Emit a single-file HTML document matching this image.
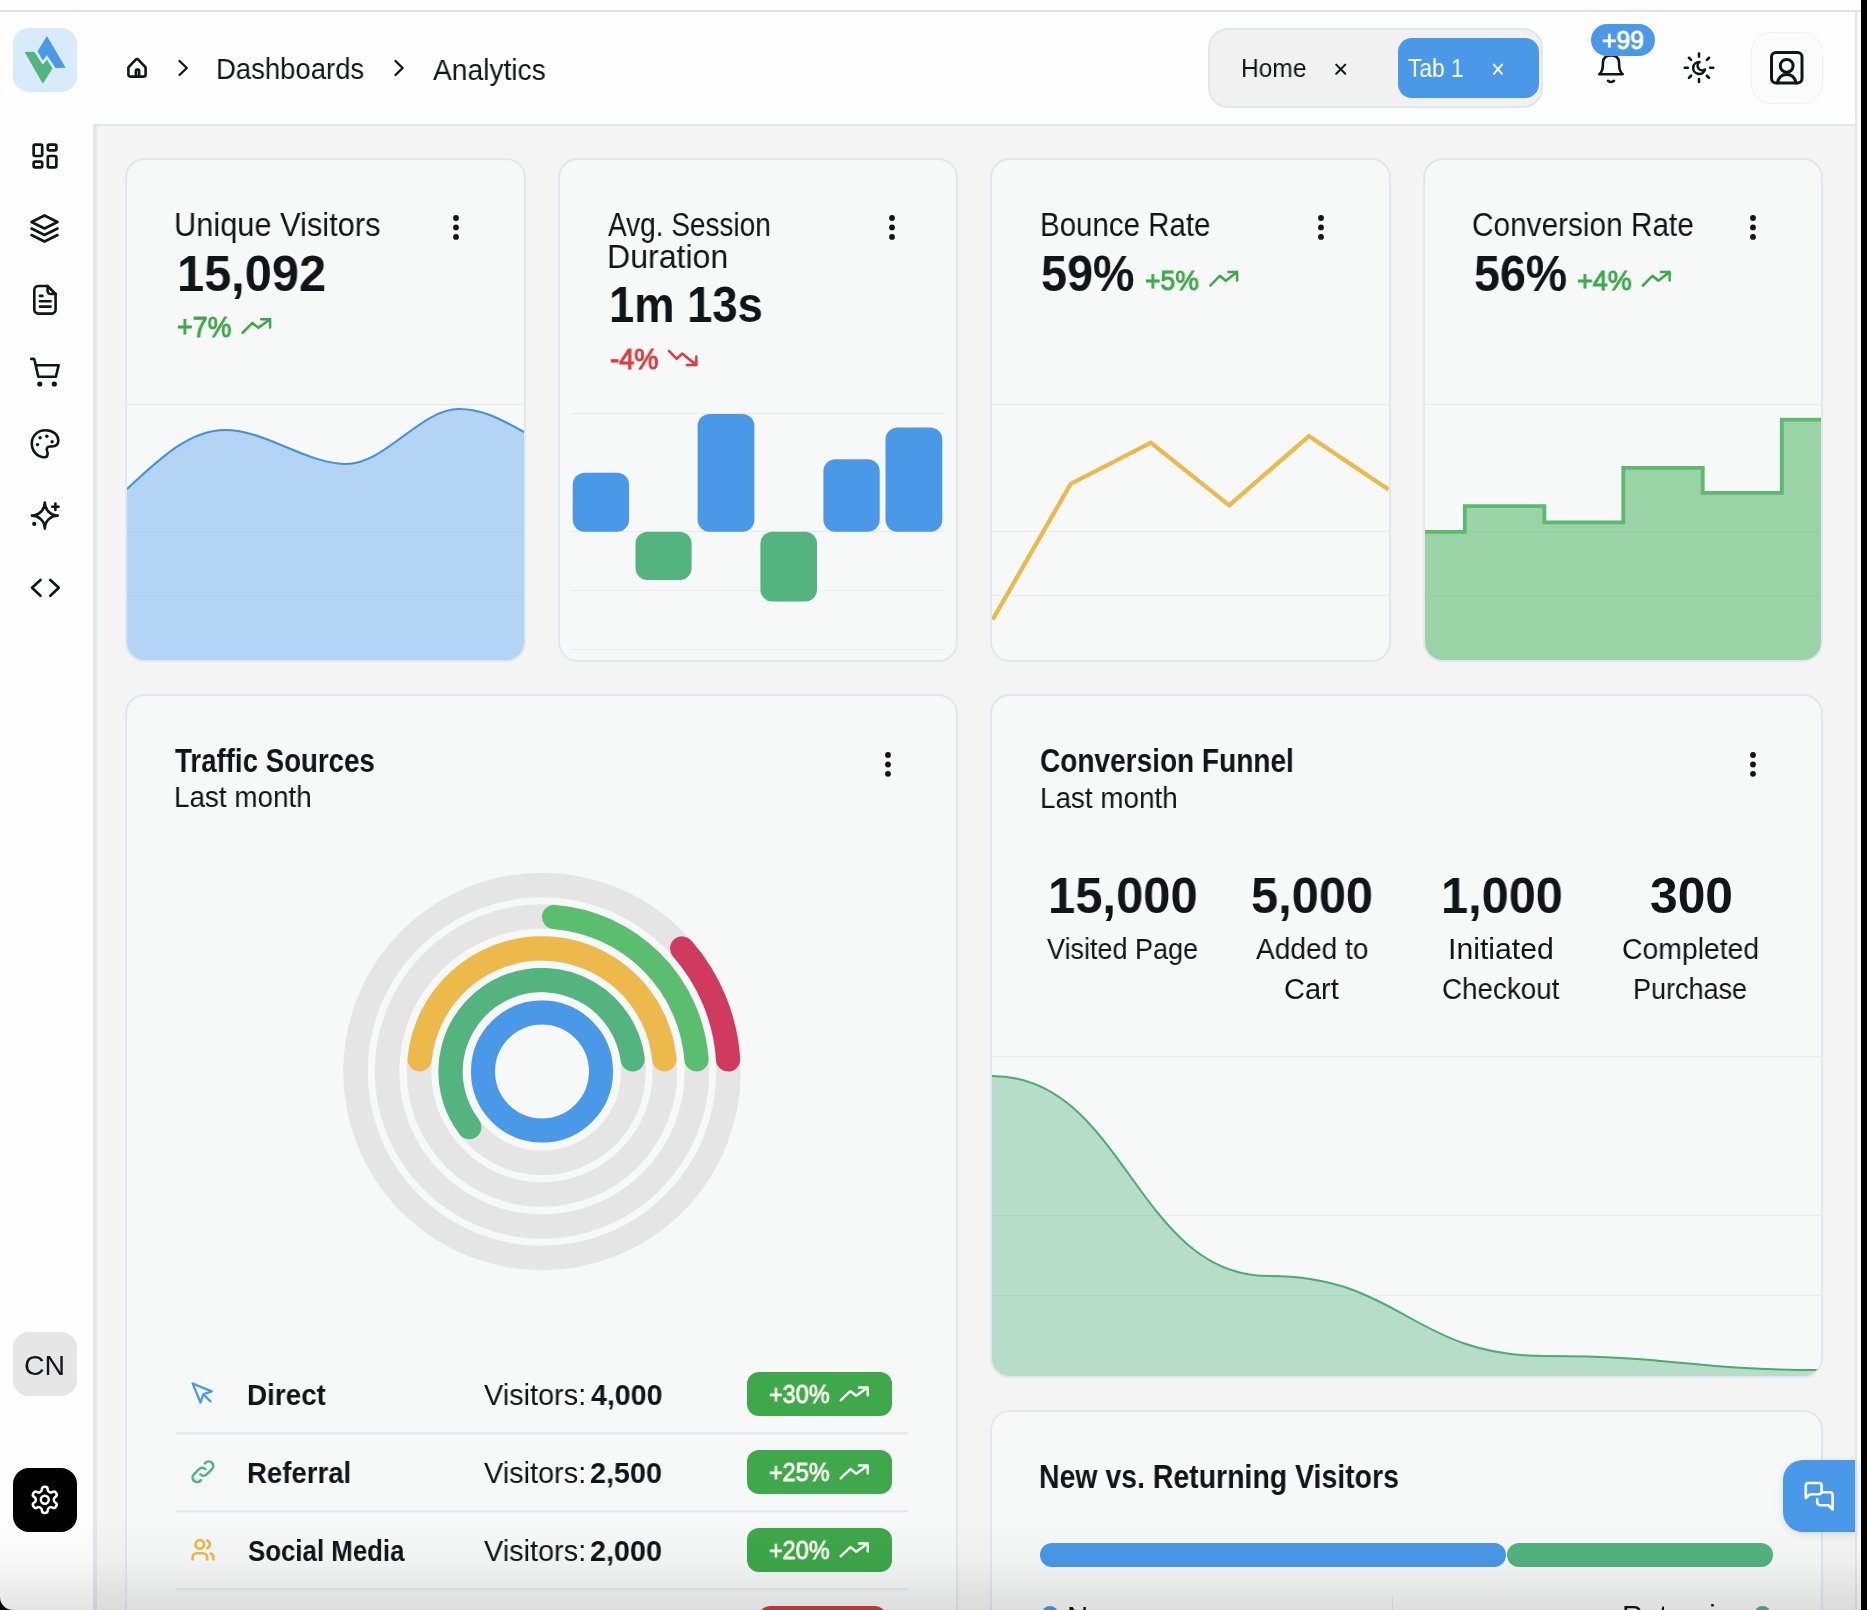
<!DOCTYPE html>
<html><head><meta charset="utf-8"><title>Analytics</title>
<style>
html,body{margin:0;padding:0}
body{width:1867px;height:1610px;overflow:hidden;position:relative;background:#f4f4f4;font-family:"Liberation Sans",sans-serif}
.t{position:absolute;white-space:pre;transform-origin:0 0;will-change:transform}
svg{overflow:visible}
</style></head><body>
<div style="position:absolute;left:0.00px;top:0.00px;width:1861.00px;height:10.00px;background:#fefefe"></div>
<div style="position:absolute;left:0.00px;top:10.00px;width:1861.00px;height:2.00px;background:#dfe2df"></div>
<div style="position:absolute;left:0.00px;top:12.00px;width:93.00px;height:1598.00px;background:#fefefe"></div>
<div style="position:absolute;left:93.00px;top:12.00px;width:1762.00px;height:112.00px;background:#fefefe"></div>
<div style="position:absolute;left:93.00px;top:124.00px;width:3.80px;height:1486.00px;background:#e1e7ed"></div>
<div style="position:absolute;left:93.00px;top:124.00px;width:1762.00px;height:2.00px;background:#e1e7ed"></div>
<div style="position:absolute;left:1855.00px;top:12.00px;width:2.00px;height:1598.00px;background:#e5e5e5"></div>
<div style="position:absolute;left:1857.00px;top:12.00px;width:4.00px;height:1598.00px;background:#f9f9f9"></div>
<div style="position:absolute;left:1861.00px;top:0.00px;width:6.00px;height:1610.00px;background:#000"></div>
<div style="position:absolute;left:13.00px;top:28.00px;width:64.00px;height:64.00px;background:#d8ebfb;border-radius:16px"></div>
<svg style="position:absolute;left:13px;top:28px;" width="64" height="64" viewBox="13 28 64 64"><polygon fill="#4a98e8" points="46.9,36 65.6,67.7 55.5,68.1 46.9,55 42.8,60.6 37.6,51.3"/><polygon fill="#53b47f" points="24.6,52 34.3,51.7 42.8,64.7 46.9,59.5 52.5,68.4 42.8,83.7"/></svg>
<svg style="position:absolute;left:120px;top:50px;" width="300" height="35" viewBox="120 50 300 35"><g fill="none" stroke="#111418" stroke-width="2.6" stroke-linecap="round" stroke-linejoin="round"><path d="M128.4,67.4 L136,59.4 a1.4,1.4 0 0 1 2,0 L145.6,67.4 V74.6 a2,2 0 0 1 -2,2 H130.4 a2,2 0 0 1 -2,-2 Z"/><path d="M135.9,76.6 V70.6 a1,1 0 0 1 1,-1 H138.1 a1,1 0 0 1 1,1 V76.6"/></g><g fill="none" stroke="#111418" stroke-width="2.3" stroke-linecap="round" stroke-linejoin="round"><path d="M179.5,61 L186.8,68 L179.5,75"/><path d="M395.5,61 L402.6,68 L395.5,75"/></g></svg>
<div class="t" style="left:216.17px;top:54.32px;font-size:29.51px;line-height:29.51px;transform:scaleX(0.9318);color:#111418">Dashboards</div>
<div class="t" style="left:433.00px;top:54.65px;font-size:29.36px;line-height:29.36px;transform:scaleX(0.9603);color:#111418">Analytics</div>
<div style="position:absolute;left:1208.00px;top:28.00px;width:335.00px;height:80.00px;box-sizing:border-box;background:#f1f1f1;border:2px solid #e1e7ed;border-radius:20px"></div>
<div style="position:absolute;left:1398.00px;top:38.00px;width:141.00px;height:60.00px;background:#4a98e8;border-radius:14px"></div>
<div class="t" style="left:1240.86px;top:55.99px;font-size:25.29px;line-height:25.29px;transform:scaleX(0.9696);color:#111418">Home</div>
<div class="t" style="left:1407.85px;top:56.09px;font-size:25.29px;line-height:25.29px;transform:scaleX(0.8983);color:#fff">Tab 1</div>
<svg style="position:absolute;left:1320px;top:55px;" width="200" height="30" viewBox="1320 55 200 30"><g fill="none" stroke-width="2.0" stroke-linecap="round"><path stroke="#111418" d="M1336.2,64.6 L1345.3,73.8 M1345.3,64.6 L1336.2,73.8"/><path stroke="#fff" d="M1493.9,64.6 L1502,73.8 M1502,64.6 L1493.9,73.8"/></g></svg>
<svg style="position:absolute;left:1590px;top:50px;" width="40" height="40" viewBox="1590 50 40 40"><g fill="none" stroke="#111418" stroke-width="2.6" stroke-linecap="round" stroke-linejoin="round"><path d="M1599.3,74.2 Q1602.6,71.5 1602.8,66 L1603,62 Q1603.5,55.5 1611,55.5 Q1618.5,55.5 1619,62 L1619.2,66 Q1619.4,71.5 1622.7,74.2 Z"/><path d="M1608,80.8 Q1611,83.2 1614,80.8"/></g></svg>
<div style="position:absolute;left:1591.00px;top:24.00px;width:64.00px;height:32.00px;background:#4a98e8;border-radius:16px"></div>
<div class="t" style="left:1602.07px;top:28.29px;font-size:25.29px;line-height:25.29px;transform:scaleX(0.9814);-webkit-text-stroke:1.00px #fff;color:#fff">+99</div>
<svg style="position:absolute;left:1680px;top:50px;" width="40" height="40" viewBox="1680 50 40 40"><g fill="none" stroke="#111418" stroke-width="2.6" stroke-linecap="round" stroke-linejoin="round"><path d="M1710.20,67.80 L1713.20,67.80 M1706.92,75.72 L1709.04,77.84 M1699.00,79.00 L1699.00,82.00 M1691.08,75.72 L1688.96,77.84 M1687.80,67.80 L1684.80,67.80 M1691.08,59.88 L1688.96,57.76 M1699.00,56.60 L1699.00,53.60 M1706.92,59.88 L1709.04,57.76 "/><path d="M1699.5,62 A6,6 0 1 0 1705,69.5 A4.6,4.6 0 0 1 1699.5,62 Z"/></g></svg>
<div style="position:absolute;left:1751.00px;top:32.00px;width:72.00px;height:72.00px;box-sizing:border-box;background:#fcfcfd;border:1.5px solid #eef1f4;border-radius:20px"></div>
<svg style="position:absolute;left:1760px;top:45px;" width="50" height="50" viewBox="1760 45 50 50"><g fill="none" stroke="#111418" stroke-width="3" stroke-linecap="round" stroke-linejoin="round"><rect x="1771.5" y="52.6" width="30.5" height="30.4" rx="4.5"/><circle cx="1786.7" cy="65.8" r="6.4"/><path d="M1777.4,83 Q1779,74.4 1786.7,74.4 Q1794.4,74.4 1796,83"/></g></svg>
<svg style="position:absolute;left:28.15px;top:138.90px" width="34.00" height="34.00" viewBox="0 0 24 24" fill="none" stroke="#111418" stroke-width="1.900" stroke-linecap="round" stroke-linejoin="round"><path d="M5 4h4a1 1 0 0 1 1 1v6a1 1 0 0 1 -1 1h-4a1 1 0 0 1 -1 -1v-6a1 1 0 0 1 1 -1"/><path d="M5 16h4a1 1 0 0 1 1 1v2a1 1 0 0 1 -1 1h-4a1 1 0 0 1 -1 -1v-2a1 1 0 0 1 1 -1"/><path d="M15 12h4a1 1 0 0 1 1 1v6a1 1 0 0 1 -1 1h-4a1 1 0 0 1 -1 -1v-6a1 1 0 0 1 1 -1"/><path d="M15 4h4a1 1 0 0 1 1 1v2a1 1 0 0 1 -1 1h-4a1 1 0 0 1 -1 -1v-2a1 1 0 0 1 1 -1"/></svg>
<svg style="position:absolute;left:25.45px;top:208.70px" width="39.00" height="39.00" viewBox="0 0 24 24" fill="none" stroke="#111418" stroke-width="1.600" stroke-linecap="round" stroke-linejoin="round"><path d="M12 4l-8 4l8 4l8 -4l-8 -4"/><path d="M4 12l8 4l8 -4"/><path d="M4 16l8 4l8 -4"/></svg>
<svg style="position:absolute;left:25px;top:278px;" width="40" height="45" viewBox="25 278 40 45"><g fill="none" stroke="#111418" stroke-width="2.6" stroke-linecap="round" stroke-linejoin="round"><path d="M47.6,286 H38.3 a4,4 0 0 0 -4,4 V309.6 a4,4 0 0 0 4,4 H51.6 a4,4 0 0 0 4,-4 V294 Z"/><path d="M47.6,286 V291 a3,3 0 0 0 3,3 H55.6"/><path d="M39.9,295.9 H42.4 M39.9,301.2 H50.6 M39.9,306.6 H50.6"/></g></svg>
<svg style="position:absolute;left:25px;top:350px;" width="40" height="45" viewBox="25 350 40 45"><g fill="none" stroke="#111418" stroke-width="2.6" stroke-linecap="round" stroke-linejoin="round"><path d="M31.3,358.9 H33 a1.6,1.6 0 0 1 1.6,1.3 L38.3,376.8 H55.9 L58.6,365.2 H35.8"/></g><circle cx="39.8" cy="384" r="2.6" fill="#111418"/><circle cx="54.3" cy="384" r="2.6" fill="#111418"/></svg>
<svg style="position:absolute;left:25px;top:422px;" width="40" height="42" viewBox="25 422 40 42"><g fill="none" stroke="#111418" stroke-width="2.6" stroke-linecap="round" stroke-linejoin="round"><path d="M44.5,457.2 C37,457.2 31.8,451 31.8,443.5 C31.8,435.5 38,430.2 45.5,430.2 C53.2,430.2 58.3,435 58.3,440.5 C58.3,444.5 55.5,446.5 51.5,446.5 H49.8 C47.3,446.5 46.2,448.6 47,450.6 C47.8,452.8 48.5,457.2 44.5,457.2 Z"/></g><g fill="#111418"><circle cx="40.1" cy="437.7" r="1.7"/><circle cx="46.9" cy="436.3" r="1.7"/><circle cx="52.1" cy="441.8" r="1.7"/><circle cx="37.5" cy="444.6" r="1.7"/></g></svg>
<svg style="position:absolute;left:25px;top:495px;" width="40" height="42" viewBox="25 495 40 42"><g fill="none" stroke="#111418" stroke-width="2.6" stroke-linecap="round" stroke-linejoin="round"><path d="M44.8,528.6 a13,13 0 0 1 13,-13 a13,13 0 0 1 -13,-13 a13,13 0 0 1 -13,13 a13,13 0 0 1 13,13 z"/><path d="M55.4,503.6 V510 M52.2,506.8 H58.6"/></g><circle cx="34.2" cy="523.9" r="2.1" fill="#111418"/></svg>
<svg style="position:absolute;left:25px;top:572px;" width="40" height="32" viewBox="25 572 40 32"><g fill="none" stroke="#111418" stroke-width="2.6" stroke-linecap="round" stroke-linejoin="round"><path d="M40.5,580 L32,587.8 L40.5,595.8 M50.3,580 L58.8,587.8 L50.3,595.8"/></g></svg>
<div style="position:absolute;left:13.00px;top:1332.00px;width:64.00px;height:64.00px;background:#e6e6e6;border-radius:16px"></div>
<div class="t" style="left:24.47px;top:1351.58px;font-size:27.91px;line-height:27.91px;transform:scaleX(1.0204);color:#111418">CN</div>
<div style="position:absolute;left:13.00px;top:1468.00px;width:64.00px;height:64.00px;background:#000;border-radius:16px"></div>
<svg style="position:absolute;left:29.00px;top:1483.80px" width="31.60" height="31.60" viewBox="0 0 24 24" fill="none" stroke="#fff" stroke-width="1.900" stroke-linecap="round" stroke-linejoin="round"><path d="M12.22 2h-.44a2 2 0 0 0-2 2v.18a2 2 0 0 1-1 1.73l-.43.25a2 2 0 0 1-2 0l-.15-.08a2 2 0 0 0-2.73.73l-.22.38a2 2 0 0 0 .73 2.73l.15.1a2 2 0 0 1 1 1.72v.51a2 2 0 0 1-1 1.74l-.15.09a2 2 0 0 0-.73 2.73l.22.38a2 2 0 0 0 2.73.73l.15-.08a2 2 0 0 1 2 0l.43.25a2 2 0 0 1 1 1.73V20a2 2 0 0 0 2 2h.44a2 2 0 0 0 2-2v-.18a2 2 0 0 1 1-1.730l.43-.25a2 2 0 0 1 2 0l.15.08a2 2 0 0 0 2.73-.73l.22-.39a2 2 0 0 0-.73-2.73l-.15-.08a2 2 0 0 1-1-1.74v-.5a2 2 0 0 1 1-1.74l.15-.09a2 2 0 0 0 .73-2.73l-.22-.38a2 2 0 0 0-2.73-.73l-.15.08a2 2 0 0 1-2 0l-.43-.25a2 2 0 0 1-1-1.73V4a2 2 0 0 0-2-2z"/><path d="M9 12a3 3 0 1 0 6 0a3 3 0 1 0 -6 0"/></svg>
<div style="position:absolute;left:125.00px;top:158.00px;width:400.50px;height:504.00px;box-sizing:border-box;background:#f7f8f8;border:2px solid #e1e7ed;border-radius:20px;overflow:hidden"><svg style="position:absolute;left:0;top:0" width="396.50" height="500.00" viewBox="127.00 160.00 396.50 500.00"><rect x="127.00" y="404" width="397.00" height="1" fill="#e8ecf0" shape-rendering="crispEdges"/><rect x="127.00" y="531" width="397.00" height="1" fill="#e8ecf0" shape-rendering="crispEdges"/><rect x="127.00" y="595" width="397.00" height="1" fill="#e8ecf0" shape-rendering="crispEdges"/><path d="M127,489 C160,458 190,430 225,430 C265,430 305,463 345,464 C385,465 420,409 459,409 C485,409 505,422 524,432 L524,662 L127,662 Z" fill="#4e9df0" fill-opacity="0.40"/><path d="M127,489 C160,458 190,430 225,430 C265,430 305,463 345,464 C385,465 420,409 459,409 C485,409 505,422 524,432" fill="none" stroke="#3f8fe6" stroke-width="2"/></svg></div>
<div style="position:absolute;left:557.50px;top:158.00px;width:400.50px;height:504.00px;box-sizing:border-box;background:#f7f8f8;border:2px solid #e1e7ed;border-radius:20px;overflow:hidden"><svg style="position:absolute;left:0;top:0" width="396.50" height="500.00" viewBox="559.50 160.00 396.50 500.00"><rect x="570.00" y="413" width="375.60" height="1" fill="#e8ecf0" shape-rendering="crispEdges"/><rect x="570.00" y="531" width="375.60" height="1" fill="#e8ecf0" shape-rendering="crispEdges"/><rect x="570.00" y="590" width="375.60" height="1" fill="#e8ecf0" shape-rendering="crispEdges"/><rect x="570.00" y="649" width="375.60" height="1" fill="#e8ecf0" shape-rendering="crispEdges"/><rect x="572.20" y="472.80" width="56.40" height="59.00" rx="12" fill="#4a98e8"/><rect x="635.00" y="531.80" width="56.10" height="48.20" rx="12" fill="#53b47f"/><rect x="697.10" y="413.90" width="56.80" height="117.90" rx="12" fill="#4a98e8"/><rect x="759.90" y="531.80" width="56.60" height="69.60" rx="12" fill="#53b47f"/><rect x="822.90" y="459.30" width="56.30" height="72.50" rx="12" fill="#4a98e8"/><rect x="885.00" y="427.40" width="56.80" height="104.40" rx="12" fill="#4a98e8"/></svg></div>
<div style="position:absolute;left:990.00px;top:158.00px;width:400.50px;height:504.00px;box-sizing:border-box;background:#f7f8f8;border:2px solid #e1e7ed;border-radius:20px;overflow:hidden"><svg style="position:absolute;left:0;top:0" width="396.50" height="500.00" viewBox="992.00 160.00 396.50 500.00"><rect x="992.00" y="404" width="396.50" height="1" fill="#e8ecf0" shape-rendering="crispEdges"/><rect x="992.00" y="531" width="396.50" height="1" fill="#e8ecf0" shape-rendering="crispEdges"/><rect x="992.00" y="595" width="396.50" height="1" fill="#e8ecf0" shape-rendering="crispEdges"/><polyline points="992.7,619.5 1070.6,484.0 1150.8,442.7 1229.2,505.3 1308.9,436.1 1388.5,489.5" fill="none" stroke="#ecb94a" stroke-width="4.2" stroke-linejoin="miter"/></svg></div>
<div style="position:absolute;left:1422.50px;top:158.00px;width:400.50px;height:504.00px;box-sizing:border-box;background:#f7f8f8;border:2px solid #e1e7ed;border-radius:20px;overflow:hidden"><svg style="position:absolute;left:0;top:0" width="396.50" height="500.00" viewBox="1424.50 160.00 396.50 500.00"><rect x="1424.50" y="404" width="396.50" height="1" fill="#e8ecf0" shape-rendering="crispEdges"/><rect x="1424.50" y="531" width="396.50" height="1" fill="#e8ecf0" shape-rendering="crispEdges"/><rect x="1424.50" y="595" width="396.50" height="1" fill="#e8ecf0" shape-rendering="crispEdges"/><path d="M1424.5,531.8 H1464.3 V506.2 H1543.9 V522.3 H1622.8 V467.8 H1702.2 V492.9 H1781.3 V419.6 H1821.0 V662 H1424.5 Z" fill="#5bba6f" fill-opacity="0.60"/><path d="M1424.5,531.8 H1464.3 V506.2 H1543.9 V522.3 H1622.8 V467.8 H1702.2 V492.9 H1781.3 V419.6 H1821.0" fill="none" stroke="#5bba6f" stroke-width="3.8"/></svg></div>
<div class="t" style="left:174.41px;top:208.08px;font-size:33.58px;line-height:33.58px;transform:scaleX(0.9167);color:#111418">Unique Visitors</div>
<div class="t" style="left:176.64px;top:248.75px;font-size:49.32px;line-height:49.32px;font-weight:700;transform:scaleX(0.9880);color:#111418">15,092</div>
<div class="t" style="left:177.00px;top:312.56px;font-size:28.63px;line-height:28.63px;transform:scaleX(0.9345);-webkit-text-stroke:1.00px #3da84a;color:#3da84a">+7%</div>
<div class="t" style="left:608.40px;top:208.08px;font-size:33.58px;line-height:33.58px;transform:scaleX(0.8332);color:#111418">Avg. Session</div>
<div class="t" style="left:606.94px;top:240.15px;font-size:33.14px;line-height:33.14px;transform:scaleX(0.9689);color:#111418">Duration</div>
<div class="t" style="left:608.53px;top:280.99px;font-size:49.03px;line-height:49.03px;font-weight:700;transform:scaleX(0.9247);color:#111418">1m 13s</div>
<div class="t" style="left:609.73px;top:344.69px;font-size:29.07px;line-height:29.07px;transform:scaleX(0.9381);-webkit-text-stroke:1.00px #e0393e;color:#e0393e">-4%</div>
<div class="t" style="left:1039.59px;top:208.08px;font-size:33.58px;line-height:33.58px;transform:scaleX(0.8776);color:#111418">Bounce Rate</div>
<div class="t" style="left:1040.58px;top:248.75px;font-size:49.32px;line-height:49.32px;font-weight:700;transform:scaleX(0.9483);color:#111418">59%</div>
<div class="t" style="left:1144.79px;top:265.61px;font-size:28.34px;line-height:28.34px;transform:scaleX(0.9370);-webkit-text-stroke:1.00px #3da84a;color:#3da84a">+5%</div>
<div class="t" style="left:1472.15px;top:208.08px;font-size:33.58px;line-height:33.58px;transform:scaleX(0.8868);color:#111418">Conversion Rate</div>
<div class="t" style="left:1473.58px;top:248.75px;font-size:49.32px;line-height:49.32px;font-weight:700;transform:scaleX(0.9441);color:#111418">56%</div>
<div class="t" style="left:1577.37px;top:265.61px;font-size:28.34px;line-height:28.34px;transform:scaleX(0.9516);-webkit-text-stroke:1.00px #3da84a;color:#3da84a">+4%</div>
<svg style="position:absolute;left:450.40px;top:212.00px" width="12" height="30"><circle cx="6" cy="6.00" r="2.9" fill="#111418"/><circle cx="6" cy="15.40" r="2.9" fill="#111418"/><circle cx="6" cy="24.90" r="2.9" fill="#111418"/></svg>
<svg style="position:absolute;left:886.00px;top:212.00px" width="12" height="30"><circle cx="6" cy="6.00" r="2.9" fill="#111418"/><circle cx="6" cy="15.40" r="2.9" fill="#111418"/><circle cx="6" cy="24.90" r="2.9" fill="#111418"/></svg>
<svg style="position:absolute;left:1314.90px;top:212.00px" width="12" height="30"><circle cx="6" cy="6.00" r="2.9" fill="#111418"/><circle cx="6" cy="15.40" r="2.9" fill="#111418"/><circle cx="6" cy="24.90" r="2.9" fill="#111418"/></svg>
<svg style="position:absolute;left:1747.10px;top:212.00px" width="12" height="30"><circle cx="6" cy="6.00" r="2.9" fill="#111418"/><circle cx="6" cy="15.40" r="2.9" fill="#111418"/><circle cx="6" cy="24.90" r="2.9" fill="#111418"/></svg>
<svg style="position:absolute;left:0px;top:0px;" width="1867" height="1610" viewBox="0 0 1867 1610"><path d="M242.50,332.78 L252.40,322.92 L258.40,327.85 L270.10,319.22 M261.10,319.22 L270.10,319.22 L270.10,327.54" fill="none" stroke="#3da84a" stroke-width="2.50" stroke-linecap="round" stroke-linejoin="round"/><path d="M668.99,350.96 L676.71,358.80 L682.06,353.52 L696.31,365.04 M686.81,365.04 L696.31,365.04 L696.31,356.40" fill="none" stroke="#e0393e" stroke-width="2.50" stroke-linecap="round" stroke-linejoin="round"/><path d="M1210.27,285.67 L1219.90,275.75 L1225.74,280.71 L1237.13,272.03 M1228.37,272.03 L1237.13,272.03 L1237.13,280.40" fill="none" stroke="#3da84a" stroke-width="2.50" stroke-linecap="round" stroke-linejoin="round"/><path d="M1642.86,285.67 L1652.47,275.75 L1658.29,280.71 L1669.64,272.03 M1660.91,272.03 L1669.64,272.03 L1669.64,280.40" fill="none" stroke="#3da84a" stroke-width="2.50" stroke-linecap="round" stroke-linejoin="round"/></svg>
<div style="position:absolute;left:125.00px;top:694.00px;width:833.00px;height:1006.00px;box-sizing:border-box;background:#f7f8f8;border:2px solid #e1e7ed;border-radius:20px;overflow:hidden"><svg style="position:absolute;left:0;top:0" width="829.00" height="1002.00" viewBox="127.00 696.00 829.00 1002.00"><circle cx="542" cy="1071.5" r="186.50" fill="none" stroke="#e5e5e5" stroke-width="24.5"/><circle cx="542" cy="1071.5" r="155.00" fill="none" stroke="#e5e5e5" stroke-width="24.5"/><circle cx="542" cy="1071.5" r="123.00" fill="none" stroke="#e5e5e5" stroke-width="24.5"/><circle cx="542" cy="1071.5" r="91.50" fill="none" stroke="#e5e5e5" stroke-width="24.5"/><circle cx="542" cy="1071.5" r="59.00" fill="none" stroke="#e5e5e5" stroke-width="24.5"/><path d="M728.11,1059.41 A186.50,186.50 0 0 0 682.15,948.45" fill="none" stroke="#cf3a5e" stroke-width="24.2" stroke-linecap="round"/><path d="M696.53,1059.41 A155.00,155.00 0 0 0 554.09,916.97" fill="none" stroke="#5bbd6e" stroke-width="24.2" stroke-linecap="round"/><path d="M664.41,1059.42 A123.00,123.00 0 0 0 419.59,1059.42" fill="none" stroke="#edb94b" stroke-width="24.2" stroke-linecap="round"/><path d="M632.70,1059.44 A91.50,91.50 0 1 0 469.33,1127.10" fill="none" stroke="#53b47f" stroke-width="24.2" stroke-linecap="round"/><circle cx="542" cy="1071.5" r="59" fill="none" stroke="#4a98e8" stroke-width="24"/><rect x="175.4" y="1432.30" width="732.4" height="2" fill="#e1e7ed"/><rect x="175.4" y="1510.30" width="732.4" height="2" fill="#e1e7ed"/><rect x="175.4" y="1588.30" width="732.4" height="2" fill="#e1e7ed"/></svg></div>
<div class="t" style="left:175.29px;top:744.17px;font-size:32.99px;line-height:32.99px;font-weight:700;transform:scaleX(0.8380);color:#111418">Traffic Sources</div>
<div class="t" style="left:174.44px;top:782.22px;font-size:29.51px;line-height:29.51px;transform:scaleX(0.9435);color:#111418">Last month</div>
<svg style="position:absolute;left:882.00px;top:748.50px" width="12" height="30"><circle cx="6" cy="6.00" r="2.9" fill="#111418"/><circle cx="6" cy="15.50" r="2.9" fill="#111418"/><circle cx="6" cy="24.80" r="2.9" fill="#111418"/></svg>
<div class="t" style="left:246.91px;top:1380.42px;font-size:29.51px;line-height:29.51px;font-weight:700;transform:scaleX(0.9428);color:#111418">Direct</div>
<div class="t" style="left:483.76px;top:1380.32px;font-size:29.51px;line-height:29.51px;transform:scaleX(0.9783);color:#111418">Visitors:</div>
<div class="t" style="left:590.52px;top:1380.32px;font-size:29.51px;line-height:29.51px;font-weight:700;transform:scaleX(0.9675);color:#111418">4,000</div>
<div style="position:absolute;left:747.20px;top:1372.20px;width:144.60px;height:43.40px;background:#3ea84a;border-radius:12px"></div>
<div class="t" style="left:768.88px;top:1381.74px;font-size:25.00px;line-height:25.00px;transform:scaleX(0.9376);-webkit-text-stroke:0.90px #fbfbf0;color:#fbfbf0">+30%</div>
<div class="t" style="left:246.93px;top:1458.42px;font-size:29.51px;line-height:29.51px;font-weight:700;transform:scaleX(0.9343);color:#111418">Referral</div>
<div class="t" style="left:483.76px;top:1458.32px;font-size:29.51px;line-height:29.51px;transform:scaleX(0.9783);color:#111418">Visitors:</div>
<div class="t" style="left:590.03px;top:1458.32px;font-size:29.51px;line-height:29.51px;font-weight:700;transform:scaleX(0.9742);color:#111418">2,500</div>
<div style="position:absolute;left:747.20px;top:1450.20px;width:144.60px;height:43.40px;background:#3ea84a;border-radius:12px"></div>
<div class="t" style="left:768.88px;top:1459.74px;font-size:25.00px;line-height:25.00px;transform:scaleX(0.9376);-webkit-text-stroke:0.90px #fbfbf0;color:#fbfbf0">+25%</div>
<div class="t" style="left:247.92px;top:1536.42px;font-size:29.51px;line-height:29.51px;font-weight:700;transform:scaleX(0.8759);color:#111418">Social Media</div>
<div class="t" style="left:483.76px;top:1536.32px;font-size:29.51px;line-height:29.51px;transform:scaleX(0.9783);color:#111418">Visitors:</div>
<div class="t" style="left:590.03px;top:1536.32px;font-size:29.51px;line-height:29.51px;font-weight:700;transform:scaleX(0.9742);color:#111418">2,000</div>
<div style="position:absolute;left:747.20px;top:1528.20px;width:144.60px;height:43.40px;background:#3ea84a;border-radius:12px"></div>
<div class="t" style="left:768.88px;top:1537.74px;font-size:25.00px;line-height:25.00px;transform:scaleX(0.9376);-webkit-text-stroke:0.90px #fbfbf0;color:#fbfbf0">+20%</div>
<svg style="position:absolute;left:0px;top:0px;" width="1867" height="1610" viewBox="0 0 1867 1610"><path d="M840.68,1400.33 L850.38,1391.05 L856.26,1395.69 L867.72,1387.57 M858.90,1387.57 L867.72,1387.57 L867.72,1395.40" fill="none" stroke="#fff" stroke-width="2.40" stroke-linecap="round" stroke-linejoin="round"/><path d="M840.68,1478.33 L850.38,1469.05 L856.26,1473.69 L867.72,1465.57 M858.90,1465.57 L867.72,1465.57 L867.72,1473.40" fill="none" stroke="#fff" stroke-width="2.40" stroke-linecap="round" stroke-linejoin="round"/><path d="M840.68,1556.33 L850.38,1547.05 L856.26,1551.69 L867.72,1543.57 M858.90,1543.57 L867.72,1543.57 L867.72,1551.40" fill="none" stroke="#fff" stroke-width="2.40" stroke-linecap="round" stroke-linejoin="round"/><g transform="translate(189.2,1380.05) scale(1.125)" fill="none" stroke="#4a98e8" stroke-width="2" stroke-linecap="round" stroke-linejoin="round"><path d="M3 3l7.07 16.97 2.51-7.39 7.39-2.51L3 3z"/><path d="M13 13l6 6"/></g><g transform="translate(187.47,1456.32) scale(1.286)" fill="none" stroke="#53b47f" stroke-width="2" stroke-linecap="round" stroke-linejoin="round"><path d="M10 14a3.5 3.5 0 0 0 5 0l4 -4a3.5 3.5 0 0 0 -5 -5l-.5 .5"/><path d="M14 10a3.5 3.5 0 0 0 -5 0l-4 4a3.5 3.5 0 0 0 5 5l.5 -.5"/></g><g fill="none" stroke="#ecb94a" stroke-width="2.6" stroke-linecap="round" stroke-linejoin="round"><circle cx="199.8" cy="1544.4" r="4.3"/><path d="M207.4,1540.6 a4.2,4.2 0 0 1 0,7.6"/><path d="M192.6,1559.4 V1557.4 a4.2,4.2 0 0 1 4.2,-4.2 H203 a4.2,4.2 0 0 1 4.2,4.2 V1559.4"/><path d="M210.8,1553.6 a4,4 0 0 1 2.6,3.8 V1559.4"/></g></svg>
<div style="position:absolute;left:756.70px;top:1605.80px;width:131.30px;height:43.40px;background:#d33c3c;border-radius:14px"></div>
<div style="position:absolute;left:990.00px;top:694.00px;width:833.00px;height:684.00px;box-sizing:border-box;background:#f7f8f8;border:2px solid #e1e7ed;border-radius:20px;overflow:hidden"><svg style="position:absolute;left:0;top:0" width="829.00" height="680.00" viewBox="992.00 696.00 829.00 680.00"><rect x="992.00" y="1056" width="829.00" height="1" fill="#e8ecf0" shape-rendering="crispEdges"/><rect x="992.00" y="1215" width="829.00" height="1" fill="#e8ecf0" shape-rendering="crispEdges"/><rect x="992.00" y="1295" width="829.00" height="1" fill="#e8ecf0" shape-rendering="crispEdges"/><path d="M992,1076 C1124.64,1076.00 1135.69,1276.00 1268.33,1276.00 C1400.97,1276.00 1412.03,1356.00 1544.67,1356.00 C1677.31,1356.00 1688.36,1370.00 1821.00,1370.00 L1821,1378 L992,1378 Z" fill="#53b47f" fill-opacity="0.40"/><path d="M992,1076 C1124.64,1076.00 1135.69,1276.00 1268.33,1276.00 C1400.97,1276.00 1412.03,1356.00 1544.67,1356.00 C1677.31,1356.00 1688.36,1370.00 1821.00,1370.00" fill="none" stroke="#4aab73" stroke-width="2"/></svg></div>
<div class="t" style="left:1039.74px;top:744.27px;font-size:32.99px;line-height:32.99px;font-weight:700;transform:scaleX(0.8498);color:#111418">Conversion Funnel</div>
<div class="t" style="left:1039.64px;top:782.52px;font-size:29.51px;line-height:29.51px;transform:scaleX(0.9435);color:#111418">Last month</div>
<svg style="position:absolute;left:1747.00px;top:748.50px" width="12" height="30"><circle cx="6" cy="6.00" r="2.9" fill="#111418"/><circle cx="6" cy="15.50" r="2.9" fill="#111418"/><circle cx="6" cy="24.80" r="2.9" fill="#111418"/></svg>
<div class="t" style="left:1048.40px;top:872.39px;font-size:49.74px;line-height:49.74px;font-weight:700;transform:scaleX(0.9837);color:#111418">15,000</div>
<div class="t" style="left:1251.23px;top:872.39px;font-size:49.74px;line-height:49.74px;font-weight:700;transform:scaleX(0.9802);color:#111418">5,000</div>
<div class="t" style="left:1440.92px;top:872.39px;font-size:49.74px;line-height:49.74px;font-weight:700;transform:scaleX(0.9786);color:#111418">1,000</div>
<div class="t" style="left:1649.75px;top:872.39px;font-size:49.74px;line-height:49.74px;font-weight:700;color:#111418">300</div>
<div class="t" style="left:1047.47px;top:934.84px;font-size:28.78px;line-height:28.78px;transform:scaleX(0.9386);color:#111418">Visited Page</div>
<div class="t" style="left:1256.00px;top:934.84px;font-size:28.78px;line-height:28.78px;transform:scaleX(0.9758);color:#111418">Added to</div>
<div class="t" style="left:1283.99px;top:974.54px;font-size:28.78px;line-height:28.78px;transform:scaleX(1.0095);color:#111418">Cart</div>
<div class="t" style="left:1448.31px;top:934.84px;font-size:28.78px;line-height:28.78px;transform:scaleX(1.0510);color:#111418">Initiated</div>
<div class="t" style="left:1442.05px;top:974.54px;font-size:28.78px;line-height:28.78px;transform:scaleX(0.9662);color:#111418">Checkout</div>
<div class="t" style="left:1621.92px;top:934.84px;font-size:28.78px;line-height:28.78px;transform:scaleX(0.9867);color:#111418">Completed</div>
<div class="t" style="left:1633.49px;top:974.54px;font-size:28.78px;line-height:28.78px;transform:scaleX(0.9381);color:#111418">Purchase</div>
<div style="position:absolute;left:990.00px;top:1410.00px;width:833.00px;height:390.00px;box-sizing:border-box;background:#f7f8f8;border:2px solid #e1e7ed;border-radius:20px;overflow:hidden"></div>
<div class="t" style="left:1039.23px;top:1460.64px;font-size:32.56px;line-height:32.56px;font-weight:700;transform:scaleX(0.8741);color:#111418">New vs. Returning Visitors</div>
<div style="position:absolute;left:1040.20px;top:1543.10px;width:466.30px;height:23.90px;background:#4a98e8;border-radius:12px"></div>
<div style="position:absolute;left:1506.50px;top:1543.10px;width:266.10px;height:23.90px;background:#53b47f;border-radius:12px"></div>
<div style="position:absolute;left:1041.60px;top:1605.70px;width:16.80px;height:16.80px;background:#4a98e8;border-radius:50%"></div>
<div class="t" style="left:1067.27px;top:1602.89px;font-size:29.07px;line-height:29.07px;transform:scaleX(1.0126);color:#111418">New</div>
<div style="position:absolute;left:1391.50px;top:1596.00px;width:1.50px;height:40.00px;background:#e1e7ed"></div>
<div class="t" style="left:1622.11px;top:1602.39px;font-size:29.07px;line-height:29.07px;transform:scaleX(0.9971);color:#111418">Returning</div>
<div style="position:absolute;left:1754.40px;top:1605.70px;width:17.00px;height:17.00px;background:#53b47f;border-radius:50%"></div>
<div style="position:absolute;left:1783.00px;top:1460.00px;width:72.00px;height:72.00px;background:#4a98e8;border-radius:20px 0 0 20px;box-shadow:0 2px 8px rgba(0,0,0,0.12)"></div>
<svg style="position:absolute;left:0px;top:0px;" width="1867" height="1610" viewBox="0 0 1867 1610"><g fill="none" stroke="#fff" stroke-width="2.6" stroke-linecap="round" stroke-linejoin="round"><path d="M1805.8,1498 V1485.6 a2.6,2.6 0 0 1 2.6,-2.6 H1819 a2.6,2.6 0 0 1 2.6,2.6 V1491.6 a2.6,2.6 0 0 1 -2.6,2.6 H1810 Z"/><path d="M1822.8,1492.2 H1830 a2.6,2.6 0 0 1 2.6,2.6 V1509.6 L1828.4,1505.2 H1819.8 a2.6,2.6 0 0 1 -2.6,-2.6 V1499.4"/></g></svg>
<div style="position:absolute;left:0.00px;top:1520.00px;width:1861.00px;height:90.00px;background:linear-gradient(to bottom, rgba(0,0,0,0) 0%, rgba(0,0,0,0.025) 45%, rgba(0,0,0,0.10) 100%)"></div>
<svg style="position:absolute;left:0px;top:1590px;" width="20" height="20" viewBox="0 1590 20 20"><path d="M0,1597 A13,13 0 0 0 13,1610 L0,1610 Z" fill="#000"/></svg>
</body></html>
